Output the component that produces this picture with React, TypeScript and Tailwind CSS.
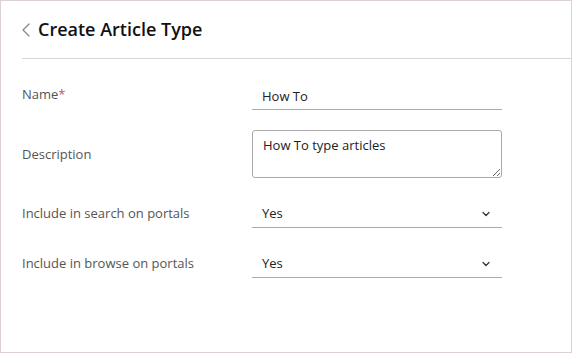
import { ChevronLeft, ChevronDown } from "lucide-react";

const font = { fontFamily: '"Open Sans", "Liberation Sans", sans-serif' };

function Row({ label, required, children }: { label: string; required?: boolean; children: React.ReactNode }) {
  return (
    <div className="flex items-center">
      <div className="w-[230px] text-[13px] text-[#555]">
        {label}
        {required && <span className="text-[#c4506a]">*</span>}
      </div>
      <div className="w-[250px]">{children}</div>
    </div>
  );
}

function SelectBox({ value }: { value: string }) {
  return (
    <div className="flex h-[29px] items-center justify-between border-b border-[#aaa] pl-[10px] pr-[10px] pt-[1px] text-[13px] text-[#222]">
      <span>{value}</span>
      <ChevronDown size={12} strokeWidth={2.5} className="text-[#333]" />
    </div>
  );
}

export default function App() {
  return (
    <div style={font} className="h-[353px] w-[572px] border border-[#ddd2d2] bg-white">
      <div className="ml-[21px] flex h-[58px] items-center border-b border-[#d6d6d6]">
        <ChevronLeft size={24} strokeWidth={1.25} className="-ml-[8px] text-[#888]" />
        <h1 className="text-[18px] font-semibold text-[#111]">Create Article Type</h1>
      </div>

      <div className="flex flex-col gap-[21px] pl-[21px] pt-[21px]">
        <Row label="Name" required>
          <div className="flex h-[30px] items-center border-b border-[#aaa] pl-[10px] pt-[4px] text-[13px] text-[#222]">
            How To
          </div>
        </Row>
        <Row label="Description">
          <textarea
            readOnly
            defaultValue="How To type articles"
            className="-mt-[1px] block h-[48px] w-full resize-y rounded-[3px] border border-[#aaa] px-[10px] pt-[5px] text-[13px] text-[#222] outline-none"
          />
        </Row>
        <Row label="Include in search on portals">
          <SelectBox value="Yes" />
        </Row>
        <Row label="Include in browse on portals">
          <SelectBox value="Yes" />
        </Row>
      </div>
    </div>
  );
}
